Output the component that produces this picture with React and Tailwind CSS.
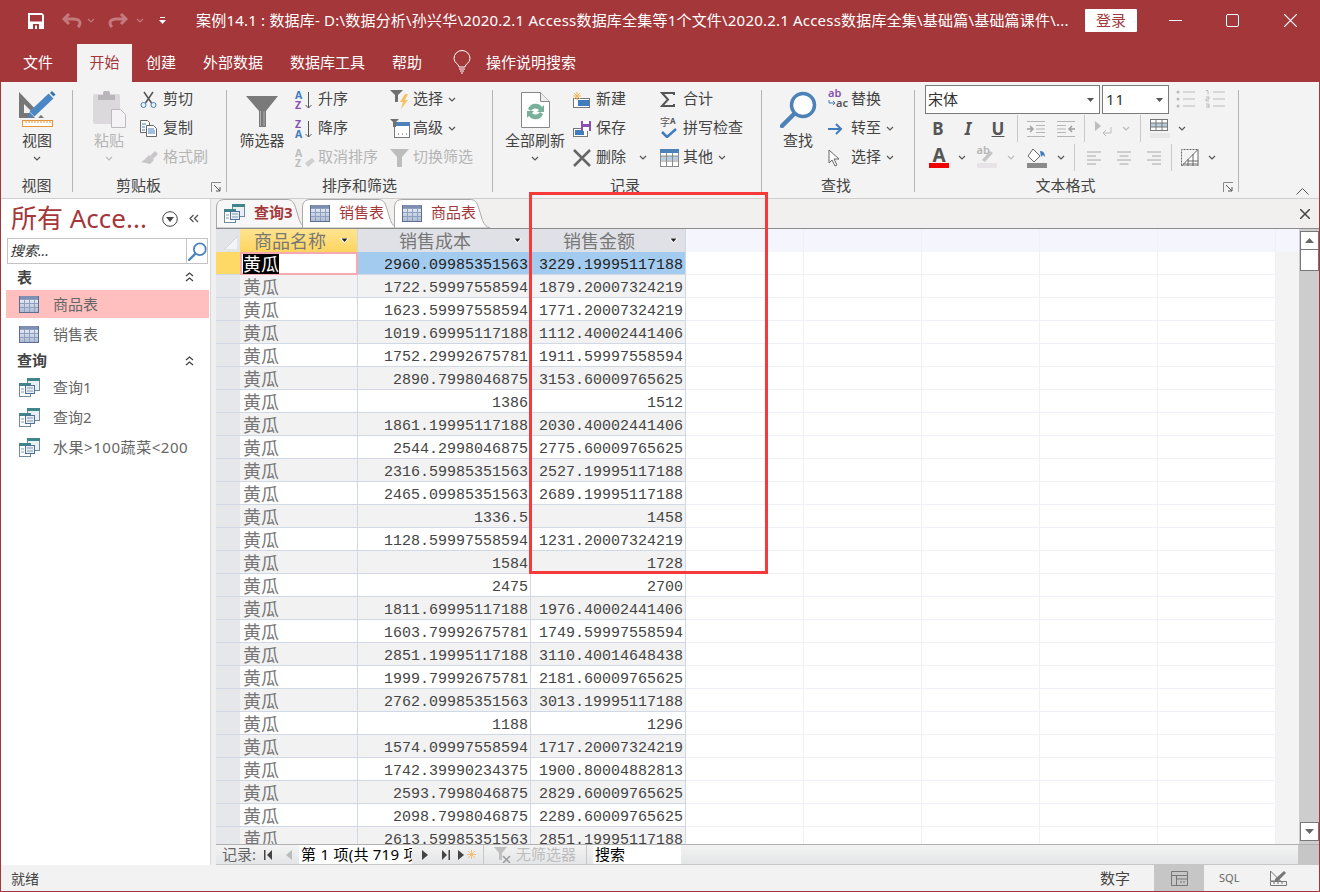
import React from "react";

const data = [
  ["2960.09985351563","3229.19995117188"],["1722.59997558594","1879.20007324219"],["1623.59997558594","1771.20007324219"],
  ["1019.69995117188","1112.40002441406"],["1752.29992675781","1911.59997558594"],["2890.7998046875","3153.60009765625"],
  ["1386","1512"],["1861.19995117188","2030.40002441406"],["2544.2998046875","2775.60009765625"],
  ["2316.59985351563","2527.19995117188"],["2465.09985351563","2689.19995117188"],["1336.5","1458"],
  ["1128.59997558594","1231.20007324219"],["1584","1728"],["2475","2700"],
  ["1811.69995117188","1976.40002441406"],["1603.79992675781","1749.59997558594"],["2851.19995117188","3110.40014648438"],
  ["1999.79992675781","2181.60009765625"],["2762.09985351563","3013.19995117188"],["1188","1296"],
  ["1574.09997558594","1717.20007324219"],["1742.39990234375","1900.80004882813"],["2593.7998046875","2829.60009765625"],
  ["2098.7998046875","2289.60009765625"],["2613.59985351563","2851.19995117188"],
];

/* ---------- icons ---------- */
const Chev = ({ c = "#555" }) => (
  <svg width="8" height="5" viewBox="0 0 8 5"><path d="M1 1l3 3 3-3" fill="none" stroke={c} strokeWidth="1.2" /></svg>
);
const Launcher = () => (
  <svg width="11" height="11" viewBox="0 0 11 11"><path d="M.5 10V.5H10" fill="none" stroke="#8a8a8a" /><path d="M3 3l6 6M9 5v4H5" fill="none" stroke="#555" /></svg>
);
const Save = () => (
  <svg width="16" height="16" viewBox="0 0 16 16"><path d="M0 0h14l2 2v14H0z" fill="#fff" /><rect x="2" y="2" width="12" height="6.500" fill="#a4373a" /><rect x="5" y="11" width="6" height="5" fill="#a4373a" /><rect x="7" y="12.500" width="2" height="3.500" fill="#fff" /></svg>
);
const Undo = ({ flip }) => (
  <svg width="20" height="15" viewBox="0 0 20 15" className={flip ? "-scale-x-100" : ""}><path d="M7 1L2 6l5 5" fill="none" stroke="#c47b7e" strokeWidth="3" /><path d="M3 6h9c4 0 6 2 6 4s-1 3-2 4" fill="none" stroke="#c47b7e" strokeWidth="3" /></svg>
);
const ViewBig = () => (
  <svg width="38" height="38" viewBox="0 0 38 38">
    <path d="M1 2v26h25z" fill="#777" /><path d="M6 14v9h9z" fill="#f3f3f3" />
    <path d="M15 26L32 8" stroke="#f3f3f3" strokeWidth="10" />
    <path d="M14 24L33 6" stroke="#4a86c4" strokeWidth="7" />
    <path d="M10 28l1.500-6 4 4.500z" fill="#4a86c4" />
    <path d="M32 3l2-2 3.500 3.500-2 2z" fill="#3a70a8" />
    <rect x="4.500" y="30.500" width="30" height="6" fill="#fff" stroke="#e8943a" />
    <path d="M8 31v2M11 31v2M14 31v2M17 31v2M20 31v2M23 31v2M26 31v2M29 31v2M32 31v2" stroke="#e8943a" />
  </svg>
);
const PasteBig = () => (
  <svg width="35" height="38" viewBox="0 0 35 38">
    <rect x="1" y="4" width="27" height="30" rx="2" fill="#dcd9dc" /><rect x="6" y="5" width="17" height="5" fill="#b9b6b9" /><rect x="11" y="1" width="7" height="6" rx="2" fill="#b9b6b9" />
    <path d="M19.500 19.500h9l5 5v13h-14z" fill="#f5f3f5" stroke="#bdbabd" />
  </svg>
);
const Scissors = () => (
  <svg width="17" height="17" viewBox="0 0 17 17"><path d="M4 1l7.500 11M13 1L5.500 12" stroke="#555" strokeWidth="1.500" fill="none" /><circle cx="3.500" cy="14" r="2.500" fill="none" stroke="#3f7cc0" /><circle cx="13.500" cy="14" r="2.500" fill="none" stroke="#3f7cc0" /></svg>
);
const Copy = () => (
  <svg width="17" height="17" viewBox="0 0 17 17"><path d="M.5.500h7l2 2v10h-9z" fill="#fff" stroke="#666" /><path d="M6.500 5.500h7l3 3v8h-10z" fill="#fff" stroke="#666" /><path d="M2 4h4M2 7h3M2 10h3M8 9h6M8 11h7M8 13h7" stroke="#3f7cc0" /></svg>
);
const Painter = () => (
  <svg width="18" height="14" viewBox="0 0 18 14"><path d="M10 5l5-5 3 3-5 5z" fill="#c8c6c8" /><path d="M9 4l5 5-4 4-9-2 3-2z" fill="#c8c6c8" /></svg>
);
const FilterBig = () => (
  <svg width="34" height="33" viewBox="0 0 34 33"><path d="M1 1h32L21 16v16h-7V16z" fill="#7a7a7a" /><path d="M15.500 16v15M19 16v15" stroke="#bbb" strokeWidth=".8" /></svg>
);
const Sort = ({ a, b, ca, cb, arrow = "#555" }) => (
  <svg width="18" height="20" viewBox="0 0 18 20" className="font-['Noto_Sans']">
    <text x="0" y="9" fontSize="10.500" fontWeight="700" fill={ca}>{a}</text>
    <text x="0" y="19" fontSize="10.500" fontWeight="700" fill={cb}>{b}</text>
    {arrow !== "none" && <path d="M13.500 2v16M10.500 15l3 3 3-3" fill="none" stroke={arrow} />}
  </svg>
);
const ClearSort = () => (
  <svg width="20" height="20" viewBox="0 0 20 20" className="font-['Noto_Sans']">
    <text x="0" y="9" fontSize="10.500" fontWeight="700" fill="#bdbdbd">A</text>
    <text x="0" y="19" fontSize="10.500" fontWeight="700" fill="#bdbdbd">Z</text>
    <path d="M10 15l7-5 3 3-7 6z" fill="#cfcfcf" />
  </svg>
);
const FilterSmall = ({ c = "#6f6f6f" }) => (
  <svg width="13" height="12" viewBox="0 0 13 12"><path d="M0 0h13L8 5v7H5V5z" fill={c} /></svg>
);
const Selection = () => (
  <span className="relative flex w-[19px] h-[19px]">
    <FilterSmall />
    <svg width="9" height="15" viewBox="0 0 9 15" className="absolute left-[10px] top-[4px]"><path d="M5 0L0 8h3l-2 7 7-9H5l3-6z" fill="#f2c263" /></svg>
  </span>
);
const Advanced = () => (
  <svg width="20" height="19" viewBox="0 0 20 19"><rect x="4.500" y="3.500" width="15" height="15" fill="#fff" stroke="#777" /><path d="M4 3h16v4H4z" fill="#4d82b8" /><path d="M0 0h9L6 3v5H3V3z" fill="#6f6f6f" /><path d="M8 15h1M12 15h1M16 15h1" stroke="#555" /></svg>
);
const Toggle = () => (
  <svg width="19" height="18" viewBox="0 0 19 18"><path d="M0 0h19L12 8v10H7V8z" fill="#bdbdbd" /></svg>
);
const RefreshBig = () => (
  <svg width="29" height="36" viewBox="0 0 29 36">
    <path d="M.5.500h19l9 9v26H.500z" fill="#fff" stroke="#888" /><path d="M19.500.500v9h9" fill="#eee" stroke="#888" />
    <path d="M7 17a8 8 0 0 1 14-2l2-2v7h-7l2-2a5 5 0 0 0-8 1z" fill="#79b09c" /><path d="M22 22a8 8 0 0 1-14 2l-2 2v-7h7l-2 2a5 5 0 0 0 8-1z" fill="#79b09c" />
  </svg>
);
const NewRec = () => (
  <svg width="17" height="16" viewBox="0 0 17 16"><rect x=".5" y="6.500" width="16" height="9" fill="#fff" stroke="#777" /><rect x="5" y="8" width="11" height="6" fill="#3f7cc0" /><path d="M4 0v8M0 4h8M1 1l6 6M7 1L1 7" stroke="#eeb556" /></svg>
);
const SaveRec = () => (
  <svg width="18" height="16" viewBox="0 0 18 16"><rect x=".5" y="7.500" width="14" height="8" fill="#fff" stroke="#777" /><rect x="2" y="9" width="9" height="5" fill="#3f7cc0" /><rect x="8" y="0" width="10" height="10" fill="#8a4fb0" /><rect x="10" y="0" width="6" height="3" fill="#fff" /><rect x="10" y="6" width="6" height="4" fill="#fff" /></svg>
);
const Del = () => (
  <svg width="18" height="18" viewBox="0 0 18 18"><path d="M1 1l16 16M17 1L1 17" stroke="#666" strokeWidth="2.500" /></svg>
);
const Sigma = () => (
  <svg width="15" height="15" viewBox="0 0 15 15"><path d="M14 3V1H2l6 6.500L2 14h12v-2" fill="none" stroke="#555" strokeWidth="2" /></svg>
);
const Spell = () => (
  <span className="relative flex w-[18px] h-[19px]">
    <span className="absolute left-0 top-[-2px] text-[10px] leading-[11px] text-[#555]">字</span>
    <span className="absolute left-[10px] top-[-3px] text-[8px] leading-[10px] font-bold text-[#555]">A</span>
    <svg width="16" height="10" viewBox="0 0 16 10" className="absolute left-[1px] top-[9px]"><path d="M1 4l5 5 9-8" fill="none" stroke="#3f7cc0" strokeWidth="2.500" /></svg>
  </span>
);
const More = () => (
  <svg width="19" height="18" viewBox="0 0 19 18"><rect x=".5" y=".5" width="18" height="17" fill="#fff" stroke="#8a8a8a" /><rect x="0" y="0" width="19" height="4" fill="#4d82b8" /><rect x="1" y="7" width="17" height="4" fill="#b9cde0" /><path d="M0 7h19M0 12h19M6.500 4v13M12.500 4v13" stroke="#8a8a8a" /></svg>
);
const SearchBig = ({ s = 37 }) => (
  <svg width={s} height={s} viewBox="0 0 37 37"><circle cx="23" cy="14" r="11.500" fill="#fff" stroke="#4d82b8" strokeWidth="3.500" /><path d="M14 23L2 35" stroke="#4d82b8" strokeWidth="4.500" strokeLinecap="round" /></svg>
);
const Replace = () => (
  <span className="relative flex w-[20px] h-[19px] font-['Noto_Sans'] font-semibold">
    <span className="absolute left-0 top-[-4px] text-[11px] leading-[13px] text-[#8a4fb0]">ab</span>
    <span className="absolute left-[8px] top-[6px] text-[11px] leading-[13px] text-[#555]">ac</span>
    <svg width="8" height="7" viewBox="0 0 8 7" className="absolute left-0 top-[10px]"><path d="M1 0v3h6M5 1l2 2-2 2" fill="none" stroke="#3f7cc0" /></svg>
  </span>
);
const GoTo = () => (
  <svg width="15" height="12" viewBox="0 0 15 12"><path d="M0 6h13M8 1l5 5-5 5" fill="none" stroke="#3f7cc0" strokeWidth="2" /></svg>
);
const Cursor = () => (
  <svg width="13" height="18" viewBox="0 0 13 18"><path d="M1 1v13l3-3 3 6 2-1-3-6h5z" fill="#fff" stroke="#666" /></svg>
);
const Lines = ({ dir = "l" }) => {
  const d = { l: "M0 1h14M0 5h9M0 9h14M0 13h9", c: "M0 1h14M2.500 5h9M0 9h14M2.500 13h9", r: "M0 1h14M5 5h9M0 9h14M5 13h9" }[dir];
  return <svg width="14" height="14" viewBox="0 0 14 14"><path d={d} stroke="#a8a8a8" /></svg>;
};
const Bullets = () => (
  <svg width="19" height="18" viewBox="0 0 19 18"><circle cx="2" cy="2" r="1.500" fill="#bbb" /><circle cx="2" cy="9" r="1.500" fill="#bbb" /><circle cx="2" cy="16" r="1.500" fill="#bbb" /><path d="M7 2h12M7 9h12M7 16h12" stroke="#bbb" /></svg>
);
const Numbers = () => (
  <svg width="20" height="18" viewBox="0 0 20 18"><path d="M8 2h12M8 9h12M8 16h12" stroke="#bbb" /><path d="M1 .5h2v4M1 7h3v2H1v2h3M1 14h3v4H1M1 16h3" fill="none" stroke="#bbb" /></svg>
);
const Indent = ({ flip }) => (
  <svg width="18" height="16" viewBox="0 0 18 16" className={flip ? "-scale-x-100" : ""}><path d="M0 .5h18M9 4.500h9M9 8h9M9 11.500h9M0 15.500h18" stroke="#b5b5b5" /><path d="M0 8h6M3 5l3 3-3 3" fill="none" stroke="#a0a0a0" strokeWidth="1.500" /></svg>
);
const Rtl = () => (
  <svg width="18" height="15" viewBox="0 0 18 15"><path d="M0 0l6 5-6 5z" fill="#bdbdbd" /><path d="M16 6v6H8M11 9l-3 3 3 3" fill="none" stroke="#bdbdbd" /></svg>
);
const GridLines = () => (
  <svg width="20" height="19" viewBox="0 0 20 19"><rect x=".5" y=".5" width="17" height="11" fill="#fff" stroke="#777" /><rect x="1" y="4" width="16" height="4" fill="#b9cde0" /><path d="M0 4h18M0 8h18M6 0v12M12 0v12" stroke="#777" /><rect x="0" y="14" width="20" height="5" fill="#e8e8e8" /></svg>
);
const AltGrid = () => (
  <svg width="18" height="17" viewBox="0 0 18 17"><path d="M.5 16.500V.5h16" fill="none" stroke="#666" strokeDasharray="2 1" /><path d="M17 .5L.5 17H17z" fill="#fff" stroke="#666" /><path d="M12 5v12M7 10v7M7 12h10M2 15h15" stroke="#666" /></svg>
);
const FillIcon = () => (
  <svg width="20" height="20" viewBox="0 0 20 20"><path d="M6 1l7 7-6 6-6-6z" fill="#fff" stroke="#666" /><path d="M13 3c4 0 5 3 5 6l-2-2-2 2z" fill="#3f7cc0" /><rect y="15" width="20" height="5" fill="#8a8a8a" /></svg>
);
const Highlight = () => (
  <span className="relative flex w-[20px] h-[20px]">
    <span className="absolute left-0 top-[-4px] text-[11px] leading-[12px] text-[#b5b5b5] font-['Noto_Sans'] font-semibold">ab</span>
    <svg width="20" height="20" viewBox="0 0 20 20" className="absolute inset-0"><path d="M5 12l8-9 3 2-8 9z" fill="#c5c5c5" /><rect y="15" width="20" height="5" fill="#e6e2e6" /></svg>
  </span>
);
const FontColor = () => (
  <span className="flex flex-col items-center w-[20px]">
    <span className="text-[19px] leading-[15px] font-bold text-[#555] font-['Noto_Sans']">A</span>
    <span className="w-[20px] h-[5px] bg-[#f00000]" />
  </span>
);
const TableIcon = () => (
  <svg width="20" height="17" viewBox="0 0 20 17"><defs><linearGradient id="tg" x1="0" y1="0" x2="0" y2="1"><stop offset="0" stopColor="#f4f6fb" /><stop offset="1" stopColor="#aab7d0" /></linearGradient></defs><rect width="20" height="17" fill="url(#tg)" /><rect width="20" height="3" fill="#7f8fb2" /><path d="M0 3.500h20M0 7.500h20M0 11.500h20M5.500 3v13M10.500 3v13M15.500 3v13" stroke="#8ea0c0" /><path d="M0 16.500h20M.5 0v17M19.500 0v17" stroke="#5d6e90" /></svg>
);
const QueryIcon = () => (
  <svg width="21" height="19" viewBox="0 0 21 19"><rect x="8.500" y=".5" width="12" height="12" fill="#e9eff2" stroke="#6d8c99" /><rect x="8" y="0" width="13" height="3" fill="#3f8589" /><rect x=".5" y="5.500" width="11" height="13" fill="#fff" stroke="#6d8c99" /><rect x="0" y="5" width="12" height="3" fill="#3f8589" /><rect x="6.500" y="7.500" width="9" height="8" fill="#e8eef6" stroke="#4d6f9c" /><path d="M2 11h3M2 14h3M8 10h6M8 13h6" stroke="#8899aa" /></svg>
);
const NavFirst = ({ flip, c = "#444" }) => (
  <svg width="8" height="10" viewBox="0 0 8 10" className={flip ? "-scale-x-100" : ""}><rect width="1.500" height="10" fill={c} /><path d="M8 0v10L3 5z" fill={c} /></svg>
);
const Tri = ({ flip, c = "#444" }) => (
  <svg width="6" height="10" viewBox="0 0 6 10" className={flip ? "-scale-x-100" : ""}><path d="M0 0v10l6-5z" fill={c} /></svg>
);
const DropTri = () => (
  <svg width="9" height="6" viewBox="0 0 9 6"><path d="M0 0h9L4.500 5.500z" fill="#fff" /><path d="M1.500 .5h6L4.500 4z" fill="#222" /></svg>
);

/* ---------- ribbon pieces ---------- */
const Sep = () => <div className="w-px mt-[5px] mb-[6px] bg-[#b5b5b5] shrink-0" />;
const VSep = () => <div className="w-px h-[27px] bg-[#c8c8c8] shrink-0" />;

const Big = ({ icon, text, dis, nochev, className = "" }) => (
  <div className={`flex flex-col items-center w-[60px] ${className}`}>
    <div className="h-[44px] flex items-end justify-center pb-[1px]">{icon}</div>
    <div className={`h-[24px] leading-[22px] whitespace-nowrap ${dis ? "text-[#b5b5b5]" : "text-[#444]"}`}>{text}</div>
    {!nochev && <div className="h-[10px] flex items-center"><Chev c={dis ? "#bbb" : "#555"} /></div>}
  </div>
);
const Small = ({ icon, text, dis, chev, chevClass = "ml-[2px]" }) => (
  <div className="h-[29px] flex items-center whitespace-nowrap">
    <div className="w-[23px] flex items-center shrink-0">{icon}</div>
    <span className={`mb-[2px] ${dis ? "text-[#b5b5b5]" : "text-[#444]"}`}>{text}</span>
    {chev && <span className={`${chevClass} w-[14px] flex justify-center`}><Chev /></span>}
  </div>
);
const Group = ({ w, label, launcher, labelClass = "", children }) => (
  <div className={`${w} relative flex flex-col shrink-0`}>
    <div className="h-[87px] flex">{children}</div>
    <div className={`text-center text-[#444] leading-[24px] h-[24px] pt-[1px] ${labelClass}`}>{label}</div>
    {launcher && <div className="absolute right-[4px] bottom-[5px] flex"><Launcher /></div>}
  </div>
);
const Slot = ({ w, children }) => <div className={`${w} flex items-center justify-center shrink-0`}>{children}</div>;

const Menu = ({ children, className = "" }) => (
  <span className={`text-white leading-[36px] h-[38px] whitespace-nowrap ${className}`}>{children}</span>
);

const NavItem = ({ icon, text, active, textClass = "" }) => (
  <div className={`flex items-center pl-[13px] ml-[5px] mr-[1px] ${active ? "bg-[#ffbfbf] h-[28px] mb-[1px]" : "h-[30px]"}`}>
    <div className="w-[34px] flex">{icon}</div>
    <span className={`text-[#666] whitespace-nowrap ${textClass}`}>{text}</span>
  </div>
);
const NavHead = ({ text, className = "" }) => (
  <div className={`flex items-center justify-between pl-[16px] pr-[16px] font-semibold text-[#444] ${className}`}>
    <span>{text}</span>
    <svg width="9" height="10" viewBox="0 0 9 10"><path d="M1 4l3.500-3L8 4M1 9l3.500-3L8 9" fill="none" stroke="#444" strokeWidth="1.300" /></svg>
  </div>
);

const DocTab = ({ w, icon, text, active, iconClass, textClass }) => (
  <div className={`${w} h-[30px] relative flex items-center shrink-0`}>
    <svg className="absolute left-0 top-0" width="100" height="30" viewBox="0 0 100 30">
      {active ? (
        <path d="M.5 30V10C.5 4 3 1.500 9 1.500H71c5 0 7 3 8.500 8l4 13c1.500 4 4 6.500 7.500 7.500z" fill="#f7f7f7" stroke="#a9a9a9" />
      ) : (
        <path d="M.5 30V10C.5 4 3 1.500 9 1.500H76c5 0 7 3 8.500 8l4 13c1.500 4 4 6.500 7.500 7.500z" fill="#fff" stroke="#a9a9a9" />
      )}
    </svg>
    <span className={`relative flex ${iconClass}`}>{icon}</span>
    <span className={`relative whitespace-nowrap text-[#a4373a] mb-[1px] ${textClass} ${active ? "font-bold" : ""}`}>{text}</span>
  </div>
);

export default function App() {
  return (
    <div className="w-[1320px] h-[892px] relative flex flex-col overflow-hidden bg-[#f3f3f3] border-x border-b border-[#a4373a] text-[15px] [font-family:'Noto_Sans','Noto_Sans_CJK_SC',sans-serif]">
      {/* title bar */}
      <div className="h-[41px] shrink-0 bg-[#a4373a] flex items-center text-white">
        <div className="ml-[27px] flex"><Save /></div>
        <div className="ml-[18px] flex"><Undo /></div>
        <div className="ml-[5px] flex"><Chev c="#c47b7e" /></div>
        <div className="ml-[13px] flex"><Undo flip /></div>
        <div className="ml-[8px] flex"><Chev c="#c47b7e" /></div>
        <div className="ml-[15px] flex">
          <svg width="7" height="8" viewBox="0 0 7 8"><path d="M1 .5h5" stroke="#fff" /><path d="M0 3h7L3.500 7z" fill="#fff" /></svg>
        </div>
        <div className="ml-[30px] w-[874px] whitespace-nowrap overflow-hidden text-[15px] tracking-[0.2px]">案例14.1 : 数据库- D:\数据分析\孙兴华\2020.2.1 Access数据库全集等1个文件\2020.2.1 Access数据库全集\基础篇\基础篇课件\...</div>
        <div className="ml-[15px] w-[52px] h-[23px] rounded-[1px] bg-white text-[#a4373a] flex items-center justify-center">登录</div>
        <div className="ml-[32px] w-[13px] h-px bg-white" />
        <div className="ml-[44px] w-[13px] h-[13px] rounded-[2px] border border-white" />
        <svg className="ml-[45px]" width="13" height="13" viewBox="0 0 13 13"><path d="M0 0l13 13M13 0L0 13" stroke="#fff" strokeWidth="1.200" /></svg>
      </div>

      {/* ribbon tabs */}
      <div className="h-[41px] shrink-0 bg-[#a4373a] flex items-end">
        <Menu className="ml-[22px]">文件</Menu>
        <div className="ml-[24px] w-[55px] h-[38px] bg-[#f3f3f3] text-[#a4373a] flex items-center justify-center pb-[2px]">开始</div>
        <Menu className="ml-[14px]">创建</Menu>
        <Menu className="ml-[27px]">外部数据</Menu>
        <Menu className="ml-[27px]">数据库工具</Menu>
        <Menu className="ml-[27px]">帮助</Menu>
        <div className="ml-[31px] h-[38px] flex items-center pb-[2px]">
          <svg width="18" height="24" viewBox="0 -2 18 24"><path d="M6 15c0-3-5-4-5-8.500a8 8 0 0 1 16 0C17 11 12 12 12 15z" fill="none" stroke="#fff" /><path d="M6 17h6M7 19h4M8 21h2" stroke="#fff" /></svg>
        </div>
        <Menu className="ml-[15px]">操作说明搜索</Menu>
      </div>

      {/* ribbon */}
      <div className="h-[116px] shrink-0 flex pt-[3px] bg-[#f3f3f3]">
        <Group w="w-[71px]" label="视图">
          <Big className="ml-[6px]" icon={<ViewBig />} text="视图" />
        </Group>
        <Sep />
        <Group w="w-[153px]" label="剪贴板" launcher labelClass="pr-[22px]">
          <Big className="ml-[6px]" icon={<PasteBig />} text="粘贴" dis />
          <div className="ml-[1px] flex flex-col">
            <Small icon={<Scissors />} text="剪切" />
            <Small icon={<Copy />} text="复制" />
            <Small icon={<Painter />} text="格式刷" dis />
          </div>
        </Group>
        <Sep />
        <Group w="w-[265px]" label="排序和筛选">
          <Big className="ml-[5px]" icon={<FilterBig />} text="筛选器" nochev />
          <div className="ml-[3px] w-[95px] flex flex-col">
            <Small icon={<Sort a="A" b="Z" ca="#3f7cc0" cb="#8a4fb0" />} text="升序" />
            <Small icon={<Sort a="Z" b="A" ca="#8a4fb0" cb="#3f7cc0" />} text="降序" />
            <Small icon={<ClearSort />} text="取消排序" dis />
          </div>
          <div className="flex flex-col">
            <Small icon={<Selection />} text="选择" chev />
            <Small icon={<Advanced />} text="高级" chev />
            <Small icon={<Toggle />} text="切换筛选" dis />
          </div>
        </Group>
        <Sep />
        <Group w="w-[268px]" label="记录" labelClass="pr-[4px]">
          <Big className="ml-[12px]" icon={<RefreshBig />} text="全部刷新" />
          <div className="ml-[8px] w-[87px] flex flex-col">
            <Small icon={<NewRec />} text="新建" />
            <Small icon={<SaveRec />} text="保存" />
            <Small icon={<Del />} text="删除" chev chevClass="ml-[10px]" />
          </div>
          <div className="flex flex-col">
            <Small icon={<Sigma />} text="合计" />
            <Small icon={<Spell />} text="拼写检查" />
            <Small icon={<More />} text="其他" chev />
          </div>
        </Group>
        <Sep />
        <Group w="w-[152px]" label="查找" labelClass="pr-[4px]">
          <Big className="ml-[6px]" icon={<SearchBig />} text="查找" nochev />
          <div className="flex flex-col">
            <Small icon={<Replace />} text="替换" />
            <Small icon={<GoTo />} text="转至" chev />
            <Small icon={<Cursor />} text="选择" chev />
          </div>
        </Group>
        <Sep />
        <Group w="w-[323px]" label="文本格式" launcher labelClass="pr-[22px]">
          <div className="flex flex-col">
            <div className="h-[29px] flex items-start">
              <div className="ml-[10px] w-[175px] h-[29px] bg-white border border-[#7a7a7a] flex items-center justify-between pl-[2px] pr-[5px] [font-family:'Noto_Sans_CJK_SC',sans-serif] text-[#333]">
                <span>宋体</span><svg width="7" height="4" viewBox="0 0 7 4"><path d="M0 0h7L3.500 4z" fill="#555" /></svg>
              </div>
              <div className="ml-[2px] w-[67px] h-[29px] bg-white border border-[#7a7a7a] flex items-center justify-between pl-[3px] pr-[5px] text-[#333]">
                <span className="tracking-[1px]">11</span><svg width="7" height="4" viewBox="0 0 7 4"><path d="M0 0h7L3.500 4z" fill="#555" /></svg>
              </div>
              <div className="ml-[7px] mt-[5px] flex"><Bullets /></div>
              <div className="ml-[10px] mt-[5px] flex"><Numbers /></div>
            </div>
            <div className="h-[29px] flex items-center pl-[8px]">
              <Slot w="w-[30px]"><span className="font-bold text-[#555] text-[17px] font-['Noto_Sans']">B</span></Slot>
              <Slot w="w-[30px]"><span className="font-bold italic text-[#555] text-[17px] font-['Noto_Sans']">I</span></Slot>
              <Slot w="w-[30px]"><span className="font-bold underline text-[#555] text-[17px] font-['Noto_Sans']">U</span></Slot>
              <div className="ml-[4px]"><VSep /></div>
              <div className="ml-[3px]" />
              <Slot w="w-[30px]"><Indent /></Slot>
              <Slot w="w-[30px]"><Indent flip /></Slot>
              <div className="ml-[3px]"><VSep /></div>
              <div className="ml-[4px]" />
              <Slot w="w-[30px]"><Rtl /></Slot>
              <Slot w="w-[14px]"><Chev c="#bbb" /></Slot>
              <div className="ml-[7px]"><VSep /></div>
              <div className="ml-[4px]" />
              <Slot w="w-[30px]"><GridLines /></Slot>
              <Slot w="w-[14px]"><Chev /></Slot>
            </div>
            <div className="h-[29px] flex items-center pl-[8px]">
              <Slot w="w-[32px]"><FontColor /></Slot>
              <Slot w="w-[14px]"><Chev /></Slot>
              <Slot w="w-[35px]"><Highlight /></Slot>
              <Slot w="w-[14px]"><Chev c="#bbb" /></Slot>
              <div className="ml-[1px]" />
              <Slot w="w-[35px]"><FillIcon /></Slot>
              <Slot w="w-[14px]"><Chev /></Slot>
              <div className="ml-[6px]"><VSep /></div>
              <div className="ml-[4px]" />
              <Slot w="w-[30px]"><Lines dir="l" /></Slot>
              <Slot w="w-[30px]"><Lines dir="c" /></Slot>
              <Slot w="w-[30px]"><Lines dir="r" /></Slot>
              <div className="ml-[2px]"><VSep /></div>
              <div className="ml-[3px]" />
              <Slot w="w-[30px]"><AltGrid /></Slot>
              <Slot w="w-[14px]"><Chev /></Slot>
            </div>
          </div>
        </Group>
        <Sep />
        <div className="flex-1 flex items-end justify-end pr-[10px] pb-[3px]">
          <svg width="13" height="7" viewBox="0 0 13 7"><path d="M.5 6.500l6-6 6 6" fill="none" stroke="#555" /></svg>
        </div>
      </div>

      {/* main */}
      <div className="flex-1 flex min-h-0 border-t border-[#cfcfcf]">
        {/* nav pane */}
        <div className="w-[209px] shrink-0 bg-white flex flex-col">
          <div className="h-[39px] flex items-center pl-[10px]">
            <span className="text-[26px] leading-[39px] text-[#a4373a] whitespace-nowrap w-[151px]">所有 Acce...</span>
            <svg className="ml-[0px]" width="16" height="16" viewBox="0 0 16 16"><circle cx="8" cy="8" r="7.300" fill="none" stroke="#444" /><path d="M4 6h8L8 11z" fill="#444" /></svg>
            <svg className="ml-[11px]" width="10" height="9" viewBox="0 0 10 9"><path d="M4.500 1L1 4.500 4.500 8M9 1L5.500 4.500 9 8" fill="none" stroke="#555" strokeWidth="1.300" /></svg>
          </div>
          <div className="ml-[6px] w-[201px] h-[26px] border border-[#c4c4c4] flex shrink-0">
            <div className="flex-1 italic text-[#333] text-[14px] leading-[23px] pl-[2px]">搜索...</div>
            <div className="w-[21px] border-l border-[#c4c4c4] flex items-center justify-center"><SearchBig s={19} /></div>
          </div>
          <NavHead text="表" className="h-[26px]" />
          <NavItem icon={<TableIcon />} text="商品表" active />
          <NavItem icon={<TableIcon />} text="销售表" />
          <NavHead text="查询" className="h-[23px]" />
          <NavItem icon={<QueryIcon />} text="查询1" />
          <NavItem icon={<QueryIcon />} text="查询2" />
          <NavItem icon={<QueryIcon />} text="水果>100蔬菜<200" textClass="tracking-[0.55px]" />
        </div>
        {/* splitter */}
        <div className="w-[6px] shrink-0 bg-[#f0f0f0] border-l border-[#d8d8d8]" />
        {/* doc area */}
        <div className="flex-1 min-w-0 flex flex-col">
          <div className="h-[30px] shrink-0 bg-[#f1f0ee] border-b border-[#8c8c8c] flex items-end relative overflow-hidden">
            <DocTab w="w-[86px]" icon={<QueryIcon />} text="查询3" active iconClass="ml-[8px]" textClass="ml-[9px]" />
            <DocTab w="w-[92px]" icon={<TableIcon />} text="销售表" iconClass="ml-[8px]" textClass="ml-[9px]" />
            <DocTab w="w-[92px]" icon={<TableIcon />} text="商品表" iconClass="ml-[8px]" textClass="ml-[9px]" />
            <svg className="absolute right-[9px] top-[10px]" width="10" height="10" viewBox="0 0 10 10"><path d="M0 0l10 10M10 0L0 10" stroke="#444" strokeWidth="1.500" /></svg>
          </div>
          <div className="flex-1 min-h-0 flex">
            <div className="flex-1 min-w-0 overflow-hidden flex flex-col">
              {/* header */}
              <div className="h-[23px] shrink-0 flex bg-[#f5f6fd]">
                <div className="w-[24px] bg-[#e3e4e8] flex items-end justify-end p-[2px]">
                  <svg width="14" height="14" viewBox="0 0 14 14"><path d="M14 0v14H0z" fill="#f4f4f6" stroke="#d0d4dc" /></svg>
                </div>
                <div className="w-[118px] bg-gradient-to-b from-[#ffe48f] to-[#fdd45e] border-r border-[#d0d7e5] flex items-center text-[18px] text-[#777] pl-[14px] pr-[8px] justify-between">
                  <span className="whitespace-nowrap pt-[2px]">商品名称</span><DropTri />
                </div>
                <div className="w-[173px] bg-[#dfe1e6] border-r border-[#d0d7e5] flex items-center text-[18px] text-[#777] pl-[41px] pr-[8px] justify-between">
                  <span className="whitespace-nowrap pt-[2px]">销售成本</span><DropTri />
                </div>
                <div className="w-[155px] bg-[#dfe1e6] border-r border-[#d0d7e5] flex items-center text-[18px] text-[#777] pl-[32px] pr-[7px] justify-between">
                  <span className="whitespace-nowrap pt-[2px]">销售金额</span><DropTri />
                </div>
                {[0, 1, 2, 3, 4].map((k) => <div key={k} className="w-[118px] shrink-0 border-r border-[#f0f1f6]" />)}
              </div>
              {/* rows */}
              <div className="flex-1 min-h-0 overflow-hidden">
                {data.map((r, i) => (
                  <div key={i} className="h-[23px] flex">
                    <div className={`w-[24px] shrink-0 border-b border-[#d0d7e5] ${i === 0 ? "bg-[#ffd966]" : "bg-[#e6e7ea]"}`} />
                    <div className={`w-[118px] shrink-0 flex items-center text-[18px] text-[#777] ${i === 0 ? "border-2 border-[#f5a9b0] bg-white pl-[1px]" : i % 2 ? "border-r border-b bg-[#f2f2f2] border-[#d0d7e5] pl-[3px] pt-[2px]" : "border-r border-b bg-white border-[#d0d7e5] pl-[3px] pt-[2px]"}`}>
                      <span className={i === 0 ? "bg-black text-white leading-[20px]" : ""}>黄瓜</span>
                    </div>
                    <div className={`w-[173px] shrink-0 overflow-hidden border-r border-b border-[#d0d7e5] text-right pr-[2px] text-[15px] leading-[28px] [font-family:'Liberation_Mono',monospace] ${i === 0 ? "bg-[#a3cbef] text-[#222]" : i % 2 ? "bg-[#f2f2f2] text-[#444]" : "bg-white text-[#444]"}`}>{r[0]}</div>
                    <div className={`w-[155px] shrink-0 overflow-hidden border-r border-b border-[#d0d7e5] text-right pr-[2px] text-[15px] leading-[28px] [font-family:'Liberation_Mono',monospace] ${i === 0 ? "bg-[#a3cbef] text-[#222]" : i % 2 ? "bg-[#f2f2f2] text-[#444]" : "bg-white text-[#444]"}`}>{r[1]}</div>
                    {[0, 1, 2, 3, 4].map((k) => <div key={k} className="w-[118px] shrink-0 bg-white border-r border-b border-[#f0f1f6]" />)}
                  </div>
                ))}
              </div>
            </div>
            {/* vertical scrollbar */}
            <div className="w-[20px] shrink-0 bg-[#cdcdcd] flex flex-col pl-[1px] pt-[2px] pb-[3px]">
              <div className="w-[19px] h-[19px] border border-[#777] bg-white flex items-center justify-center">
                <svg width="9" height="5" viewBox="0 0 9 5"><path d="M0 5h9L4.500 0z" fill="#666" /></svg>
              </div>
              <div className="w-[19px] h-[21px] border border-[#777] border-t-0 bg-white" />
              <div className="flex-1" />
              <div className="w-[19px] h-[19px] border border-[#777] bg-white flex items-center justify-center">
                <svg width="9" height="5" viewBox="0 0 9 5"><path d="M0 0h9L4.500 5z" fill="#666" /></svg>
              </div>
            </div>
          </div>
          {/* record nav */}
          <div className="h-[21px] shrink-0 flex border-t border-b border-t-[#b0b0b0] border-b-[#c6c6c6] bg-gradient-to-b from-[#f3f3f3] to-[#e4e5e7] text-[15px] text-[#666]">
            <span className="ml-[6px] w-[42px] whitespace-nowrap leading-[19px]">记录:</span>
            <div className="w-[22px] flex items-center"><NavFirst /></div>
            <div className="w-[9px] flex items-center"><Tri flip c="#bbb" /></div>
            <div className="ml-[4px] w-[113px] bg-white text-black whitespace-nowrap overflow-hidden leading-[19px] pl-[2px] tracking-[0.25px]">第 1 项(共 719 项)</div>
            <div className="ml-[10px] w-[17px] flex items-center"><Tri /></div>
            <div className="ml-[3px] w-[16px] flex items-center"><NavFirst flip /></div>
            <div className="flex items-center w-[8px]"><Tri /></div>
            <div className="w-[15px] flex items-center pl-[1px]">
              <svg width="9" height="9" viewBox="0 0 9 9"><path d="M4.500 0v9M0 4.500h9M1 1l7 7M8 1L1 8" stroke="#eec07a" /></svg>
            </div>
            <div className="ml-[2px] w-px bg-[#c8c8c8]" />
            <div className="ml-[10px] w-[20px] flex items-center relative">
              <svg width="18" height="16" viewBox="0 0 18 16"><path d="M0 0h13L8 6v7H5V6z" fill="#c0c0c0" /><path d="M9 9l7 7M16 9l-7 7" stroke="#999" strokeWidth="1.500" /></svg>
            </div>
            <span className="ml-[2px] w-[60px] text-[#bdbdbd] whitespace-nowrap leading-[19px]">无筛选器</span>
            <div className="ml-[10px] w-px bg-[#c8c8c8]" />
            <div className="ml-[6px] w-[88px] bg-white text-black leading-[19px] pl-[2px]">搜索</div>
            <div className="flex-1" />
            <div className="w-[21px] bg-[#c6c6c6]" />
          </div>
        </div>
      </div>

      {/* status bar */}
      <div className="h-[26px] shrink-0 flex items-center bg-[#f2f2f2] text-[#444] text-[14px]">
        <span className="ml-[10px]">就绪</span>
        <div className="flex-1" />
        <span className="text-[15px]">数字</span>
        <div className="ml-[24px] w-[50px] h-full bg-[#c6c6c6] flex items-center justify-center">
          <svg width="17" height="15" viewBox="0 0 17 15"><path d="M.5.500h16v14H.5zM.5 4.500h16M5.500 4.500v10M5.500 8h11M9 11h2M12 11h2" fill="none" stroke="#777" /></svg>
        </div>
        <span className="ml-[15px] w-[20px] text-[11px] text-[#666] font-['Noto_Sans']">SQL</span>
        <div className="ml-[31px] mr-[32px] flex">
          <svg width="17" height="16" viewBox="0 0 17 16"><path d="M.5 1v10h10z" fill="none" stroke="#777" /><path d="M5 9L14 1l2 2-8 8-3 1z" fill="#777" /><path d="M.5 11.500h16v4H.5zM4 12v2M8 12v2M12 12v2" fill="none" stroke="#777" /></svg>
        </div>
      </div>

      {/* red annotation box */}
      <div className="absolute left-[528px] top-[192px] w-[239px] h-[382px] border-[3px] border-[#f63a3a] pointer-events-none" />
    </div>
  );
}
